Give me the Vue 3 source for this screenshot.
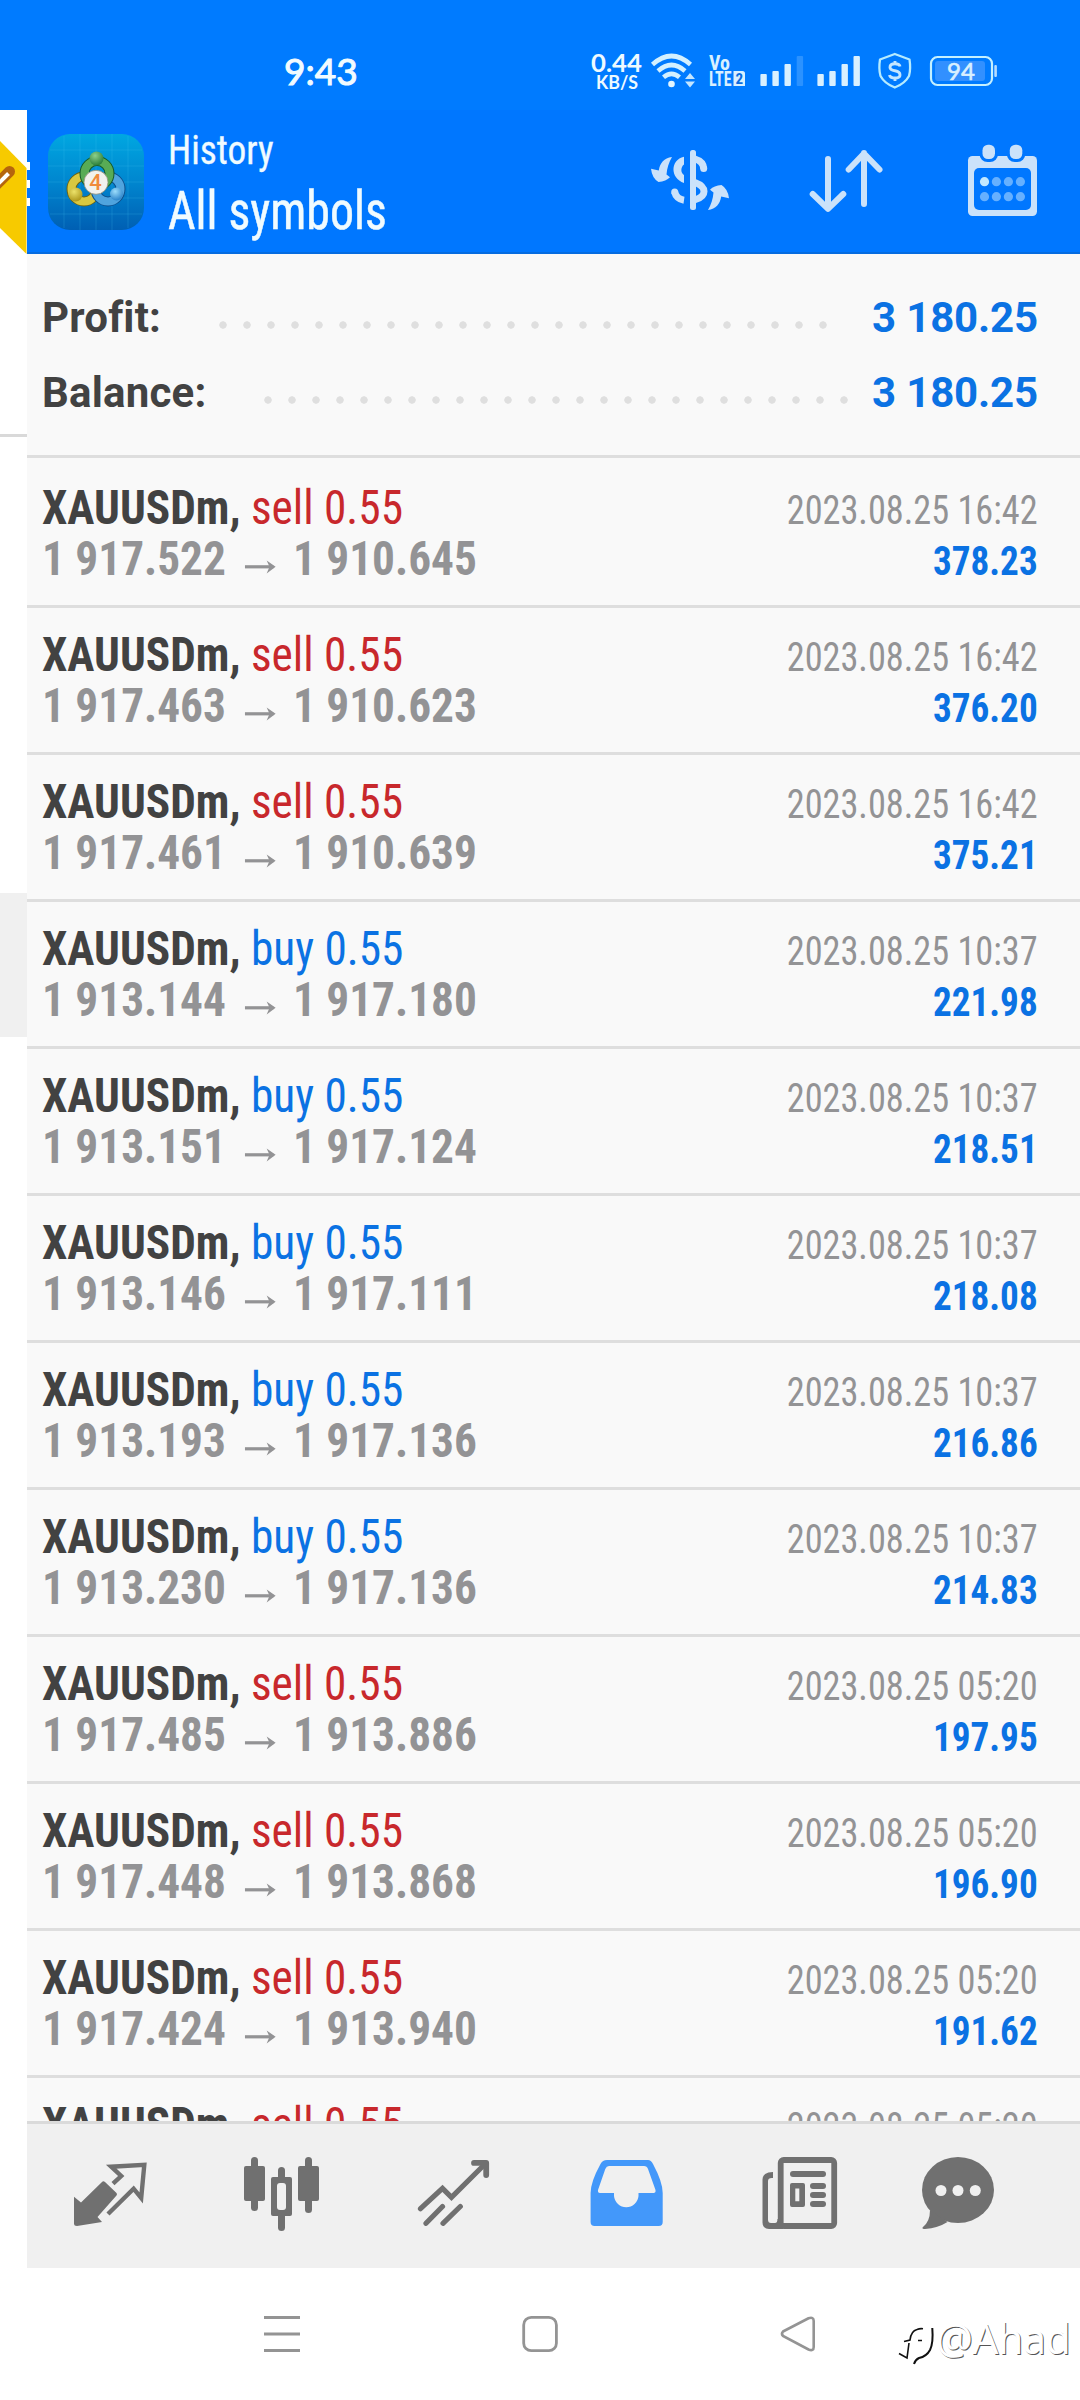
<script setup>
const D = '2023.08.25 '
const rows = [
  ['sell', '1 917.522', '1 910.645', '16:42', '378.23'],
  ['sell', '1 917.463', '1 910.623', '16:42', '376.20'],
  ['sell', '1 917.461', '1 910.639', '16:42', '375.21'],
  ['buy', '1 913.144', '1 917.180', '10:37', '221.98'],
  ['buy', '1 913.151', '1 917.124', '10:37', '218.51'],
  ['buy', '1 913.146', '1 917.111', '10:37', '218.08'],
  ['buy', '1 913.193', '1 917.136', '10:37', '216.86'],
  ['buy', '1 913.230', '1 917.136', '10:37', '214.83'],
  ['sell', '1 917.485', '1 913.886', '05:20', '197.95'],
  ['sell', '1 917.448', '1 913.868', '05:20', '196.90'],
  ['sell', '1 917.424', '1 913.940', '05:20', '191.62'],
  ['sell'],
].map(([side, open, close, time = '05:20', profit]) => ({ side, open, close, date: D + time, profit }))
</script>

<template>
  <div class="screen">
    <div class="status">
      <span class="clock">9:43</span>
      <svg class="sys" viewBox="585 40 420 60" width="420" height="60">
        <g class="net">
          <text x="591" y="71.500" font-size="25.500" textLength="51" lengthAdjust="spacingAndGlyphs">0.44</text>
          <text x="596" y="89.300" font-size="18" textLength="42" lengthAdjust="spacingAndGlyphs">KB/S</text>
        </g>
        <g fill="none" stroke="#d3f0ff" stroke-width="4.600">
          <path d="M652.500 64.500Q671.500 47.500 690.500 64.500" />
          <path d="M658 71Q671.500 59 685 71" />
          <path d="M663.500 77.300Q671.500 70.500 679.500 77.300" />
        </g>
        <circle cx="671.500" cy="84" r="3.300" fill="#e3f6ff" />
        <path d="M685 79l5-6 5 6zM685 81.500h10l-5 6z" fill="#c4e6ff" />
        <g class="volte">
          <text x="709" y="70" font-size="19.500" textLength="21" lengthAdjust="spacingAndGlyphs">Vo</text>
          <text x="709" y="85.800" font-size="20" textLength="22.500" lengthAdjust="spacingAndGlyphs">LTE</text>
          <path d="M733.500 71h9a2.500 2.500 0 0 1 2.500 2.500V86h-11.500z" />
          <text class="sim" x="735.500" y="83.700" font-size="15">2</text>
        </g>
        <g fill="#d9f0ff">
          <rect x="760.400" y="74" width="6.400" height="12" rx="1" />
          <rect x="772.400" y="71" width="6.400" height="15" rx="1" />
          <rect x="784.500" y="64" width="6.400" height="22" rx="1" />
          <rect x="796.700" y="56" width="6.400" height="30" rx="1" opacity=".2" />
          <rect x="817.400" y="74" width="6.400" height="12" rx="1" />
          <rect x="829.300" y="71" width="6.400" height="15" rx="1" />
          <rect x="841.500" y="64" width="6.400" height="22" rx="1" />
          <rect x="853.500" y="56" width="6.400" height="30" rx="1" />
        </g>
        <path d="M894.800 54L909.500 59.500Q911 69 909 76Q905 83.500 894.800 87.500Q884.500 83.500 880.500 76Q878.500 69 880 59.500Z" fill="none" stroke="#b5ebff" stroke-width="2.300" stroke-linejoin="round" />
        <path d="M900 66.500Q899.500 63.800 895 63.800Q890 63.800 890 67.300Q890 70 895 70.800Q900 71.600 900 75Q900 78 895 78Q890 78 889.500 75M895 61v3M895 78v3" fill="none" stroke="#c4e6ff" stroke-width="2.900" />
        <rect x="931" y="57" width="61" height="28" rx="6.500" fill="none" stroke="#c4f0ff" stroke-width="2.200" />
        <rect x="935" y="61" width="50" height="20" rx="3" fill="#3290ff" />
        <rect x="994.300" y="65" width="2.600" height="12" rx="1" fill="#b5dcff" />
        <text class="pct" x="947" y="80" font-size="24">94</text>
      </svg>
    </div>

    <div class="body">
      <aside class="edge">
        <svg class="tag" viewBox="0 0 27 144" width="27" height="144">
          <path d="M0 31L26.500 58V144L0 118Z" fill="#f7ca00" />
          <path d="M-6 77L9.500 61.500" stroke="#b5650d" stroke-width="11" stroke-linecap="round" />
          <path d="M-6 78L8.500 63.500" stroke="#fff" stroke-width="4" />
        </svg>
        <i class="rule"></i>
        <i class="block"></i>
      </aside>

      <main class="app">
        <header class="bar">
          <div class="grip"><i></i><i></i><i></i></div>
          <svg class="logo" viewBox="0 0 96 96" width="96" height="96">
            <defs>
              <linearGradient id="sky" x1="0" y1="0" x2="0" y2="1"><stop offset="0" stop-color="#00a7e1" /><stop offset=".5" stop-color="#0086cf" /><stop offset="1" stop-color="#005fb3" /></linearGradient>
              <radialGradient id="gr" cx=".4" cy=".3" r=".8"><stop offset="0" stop-color="#8ed08a" /><stop offset="1" stop-color="#1d7430" /></radialGradient>
              <radialGradient id="ye" cx=".4" cy=".3" r=".8"><stop offset="0" stop-color="#ece26a" /><stop offset="1" stop-color="#a58d10" /></radialGradient>
              <radialGradient id="bl" cx=".4" cy=".3" r=".8"><stop offset="0" stop-color="#9bdcfb" /><stop offset="1" stop-color="#1c78c4" /></radialGradient>
            </defs>
            <rect width="96" height="96" rx="22" fill="url(#sky)" />
            <path d="M16 2V94M32 0V96M48 0V96M64 0V96M80 2V94M2 16H94M0 32H96M0 48H96M0 64H96M2 80H94" stroke="#4cc8f0" stroke-opacity=".2" />
            <g fill="none">
              <circle cx="36" cy="55" r="12.500" stroke="#6e6410" stroke-width="10" /><circle cx="36" cy="55" r="12.500" stroke="#d9c840" stroke-width="8" />
              <circle cx="60" cy="55" r="12.500" stroke="#0d4f8c" stroke-width="10" /><circle cx="60" cy="55" r="12.500" stroke="#4fa4de" stroke-width="8" />
              <circle cx="49" cy="39.500" r="12.500" stroke="#14592a" stroke-width="10" /><circle cx="49" cy="39.500" r="12.500" stroke="#58ab55" stroke-width="8" />
            </g>
            <circle cx="48.500" cy="24.500" r="7" fill="url(#gr)" /><circle cx="27.500" cy="60.500" r="7" fill="url(#ye)" /><circle cx="68.500" cy="60" r="6.500" fill="url(#bl)" />
            <circle cx="48" cy="48.300" r="12" fill="#f1f1ee" stroke="#8f8f7a" stroke-width=".8" />
            <text x="47.500" y="55.500" text-anchor="middle" class="four">4</text>
          </svg>
          <div class="titles">
            <span class="t1">History</span>
            <span class="t2">All symbols</span>
          </div>
          <svg class="i-dollar" viewBox="650 148 80 64" width="80" height="64" fill="#cbe2fa">
            <rect x="690" y="150" width="6" height="60" rx="2.500" />
            <path d="M684 156.700C670 160 670 178 684 183V175C680.500 173 680.500 167 684 164.500Z" />
            <g fill="none" stroke="#cbe2fa" stroke-width="7">
              <path d="M674.700 192C675.500 196 679 199.500 684 200.200" /><circle cx="674.700" cy="192" r="3.500" fill="#cbe2fa" stroke="none" />
              <path d="M695 159C700 160.500 703.500 164 703.700 168.500" /><circle cx="703.700" cy="168.500" r="3.500" fill="#cbe2fa" stroke="none" />
              <path d="M695 182.500C707 187 707 196 695 199.700" />
            </g>
            <path id="swing" d="M672 157C664 158 660 163 658.800 170.500L651 168.700Q652 178 658.500 182Q666 181.500 670 177.300L666.500 174.500C667 168 669 162 672 157Z" />
            <use href="#swing" transform="rotate(180 690 183.500)" />
          </svg>
          <svg class="i-sort" viewBox="808 148 78 66" width="78" height="66" fill="none" stroke="#cbe2fa" stroke-width="6" stroke-linecap="round" stroke-linejoin="round">
            <path d="M828 159V208M812.700 194L828 208.800L843.300 194M864 204V153M848.700 169.500L864 153.500L879.500 169.500" />
          </svg>
          <svg class="i-cal" viewBox="967 144 71 73" width="71" height="73">
            <rect x="968" y="156" width="69" height="60" rx="4.500" fill="#cbe2fa" />
            <rect x="974" y="168" width="57" height="42" rx="5" fill="#0077ff" />
            <g fill="#0077ff"><rect x="979.500" y="142" width="18.500" height="20" rx="8" /><rect x="1006.800" y="142" width="18.500" height="20" rx="8" /></g>
            <g fill="#cbe2fa"><rect x="982.500" y="144.700" width="12.500" height="14.300" rx="5.500" /><rect x="1009.800" y="144.700" width="12.500" height="14.300" rx="5.500" /></g>
            <g fill="#66b0ff">
              <circle cx="984.500" cy="181.700" r="4.600" fill="#c2e8ff" /><circle cx="996.400" cy="181.700" r="4.600" /><circle cx="1008.400" cy="181.700" r="4.600" /><circle cx="1020.400" cy="181.700" r="4.600" />
              <circle cx="984.500" cy="196.700" r="4.600" /><circle cx="996.400" cy="196.700" r="4.600" /><circle cx="1008.400" cy="196.700" r="4.600" /><circle cx="1020.400" cy="196.700" r="4.600" />
            </g>
          </svg>
        </header>

        <section class="summary">
          <div class="line"><span class="lab">Profit:</span><i class="dots d1"></i><span class="val">3 180.25</span></div>
          <div class="line"><span class="lab">Balance:</span><i class="dots d2"></i><span class="val">3 180.25</span></div>
        </section>

        <section class="list">
          <div v-for="(r, i) in rows" :key="i" class="row">
            <div class="left">
              <div class="deal"><b>XAUUSDm,</b> <span :class="r.side">{{ r.side }} 0.55</span></div>
              <div v-if="r.open" class="prices"><span>{{ r.open }}</span><svg width="34" height="14" viewBox="0 0 34 14"><path d="M1 6.800H31" fill="none" stroke="#939395" stroke-width="3.200" /><path d="M24 .500L33.500 6.800L24 13.500L27 6.800Z" fill="#939395" /></svg><span>{{ r.close }}</span></div>
            </div>
            <div class="right">
              <span class="date">{{ r.date }}</span>
              <span v-if="r.profit" class="profit">{{ r.profit }}</span>
            </div>
          </div>
        </section>

        <nav class="tabs">
          <svg viewBox="72 2156 76 76" width="76" height="76" fill="#707070">
            <path d="M74 2196.700L81 2202.500L102 2182Q103.300 2180.700 105 2182L116.500 2193Q117.500 2194.300 116.500 2195.500L97.500 2217L102 2222L77 2226Q74 2226 74 2223.500Z" />
            <path d="M113 2183.700L121.200 2176L111.200 2166.700L144.300 2164.900L141.200 2198L133.600 2188.700L108 2214" fill="none" stroke="#707070" stroke-width="4.400" />
          </svg>
          <svg viewBox="243 2156 77 76" width="77" height="76" fill="#707070">
            <rect x="251" y="2157" width="7" height="54" rx="3.500" /><rect x="244" y="2166" width="21" height="35" rx="2" />
            <rect x="278" y="2167" width="7" height="64" rx="3.500" /><rect x="271" y="2177" width="21" height="39" rx="2" />
            <rect x="277" y="2183" width="9" height="27" rx="3" fill="#f0f0f0" />
            <rect x="305" y="2157" width="7" height="56" rx="3.500" /><rect x="298" y="2166" width="21" height="35" rx="2" />
          </svg>
          <svg viewBox="417 2156 73 76" width="73" height="76" fill="none" stroke="#707070" stroke-width="5.200" stroke-linecap="round">
            <path d="M420.500 2208.700L442.500 2188.300L451.500 2197.300L485 2164M426 2223.300L442.500 2206.500M443 2223.300L460.300 2206.500" />
            <path d="M474 2162.900H486.200V2175" stroke-width="5.800" stroke-linejoin="round" />
          </svg>
          <svg viewBox="590 2156 73 76" width="73" height="76">
            <path fill-rule="evenodd" fill="#4398fa" d="M607 2160H648Q651 2160 653 2164Q662.700 2182 662.700 2193V2222Q662.700 2226 658.700 2226H594.600Q590.600 2226 590.600 2222V2193Q590.600 2182 600.500 2164Q602.500 2160 607 2160ZM609 2166Q606.500 2166 605.300 2169L598 2190Q597.500 2193 600 2193H614V2196A12.300 12.300 0 0 0 638.500 2196V2193H653.500Q656 2193 655.500 2190L648 2169Q647 2166 644 2166Z" />
          </svg>
          <svg viewBox="762 2156 76 76" width="76" height="76" fill="#707070">
            <rect x="780.700" y="2160" width="53.500" height="66" rx="3" fill="none" stroke="#707070" stroke-width="5.800" />
            <path d="M773 2172V2178Q768 2177.500 768 2181V2219.500Q768 2223 771 2223H775Q777.500 2223 777.500 2219H783V2229H769Q762.500 2229 762.500 2222.500V2179.500Q762.500 2172 773 2172Z" />
            <rect x="790" y="2171" width="36" height="6" rx="3" />
            <path fill-rule="evenodd" d="M792 2183H803Q805 2183 805 2185V2205Q805 2207 803 2207H792Q790 2207 790 2205V2185Q790 2183 792 2183ZM795.300 2188.500V2201.300H799.300V2188.500Z" />
            <rect x="810" y="2183" width="16" height="6" rx="3" /><rect x="810" y="2192" width="16" height="6" rx="3" /><rect x="810" y="2201" width="16" height="6" rx="3" />
          </svg>
          <svg viewBox="921 2156 74 76" width="74" height="76" fill="#707070">
            <ellipse cx="958" cy="2190" rx="36" ry="33" />
            <path d="M930 2210Q930 2222 922.500 2227.500Q922 2229.300 925 2229Q938 2228 947.500 2222Z" />
            <g fill="#f0f0f0"><circle cx="941" cy="2190.500" r="5.500" /><circle cx="958" cy="2190.500" r="5.500" /><circle cx="975.300" cy="2190.500" r="5.500" /></g>
          </svg>
        </nav>
      </main>
    </div>

    <footer class="sysnav">
      <svg viewBox="263 2314 38 40" width="38" height="40"><path d="M264 2317.500H300M264 2334H300M264 2350.500H300" stroke="#949494" stroke-width="3" /></svg>
      <svg viewBox="521 2314 38 40" width="38" height="40"><rect x="523.700" y="2317.400" width="32.700" height="33.300" rx="7.500" fill="none" stroke="#949494" stroke-width="2.800" /></svg>
      <svg viewBox="779 2314 38 40" width="38" height="40"><path d="M783 2331.500L808.500 2318.300Q813.700 2316.500 813.700 2321V2347Q813.700 2351.500 808.500 2349.500L783 2336Q781 2333.700 783 2331.500Z" fill="none" stroke="#949494" stroke-width="2.600" /></svg>
      <div class="mark">
        <svg viewBox="896 2324 40 42" width="40" height="42" fill="none" stroke="#111" stroke-width="1.600"><path d="M904 2341.500L910 2340Q911 2331 917 2329.500Q920 2328.300 923 2328.800M909 2343L907 2358L899 2353.500M918 2340.500H922" /><path d="M932.300 2328Q933.500 2343 930 2350Q926.500 2356.500 919 2358Q915.500 2359.500 914 2364" stroke-width="2" /></svg>
        <span>@Ahad</span>
      </div>
    </footer>
  </div>
</template>

<style>
body { margin: 0; background: #fff; }
</style>

<style scoped>
.screen { width: 1080px; height: 2400px; overflow: hidden; display: flex; flex-direction: column; font-family: Roboto, "Liberation Sans", sans-serif; background: #fff; }
svg { display: block; flex: none; }
.status { height: 110px; flex: none; background: #007bff; display: flex; box-sizing: border-box; padding: 40px 75px 0 284px; justify-content: space-between; }
.clock { color: #f2fbff; font: 400 37px/62px Lato, sans-serif; -webkit-text-stroke: 1px #f2fbff; }
.net text { fill: #eefaff; font-family: Lato, sans-serif; font-weight: 700; }
.volte { fill: #d9f0ff; font-family: Roboto, sans-serif; font-weight: 700; font-stretch: 75%; }
.volte .sim { fill: #0a6be0; }
.pct { fill: #d9f0ff; font-family: Lato, sans-serif; font-weight: 400; stroke: #d9f0ff; stroke-width: .6px; }
.body { display: flex; height: 2158px; flex: none; }
.edge { width: 27px; flex: none; }
.rule { display: block; height: 3px; margin-top: 180px; background: #d9d9d9; }
.block { display: block; height: 144px; margin-top: 456px; background: #f0f0f0; }
.app { flex: 1; display: flex; flex-direction: column; background: #f9f9f9; }
.bar { height: 144px; flex: none; display: flex; background: #07f; box-sizing: border-box; border-bottom: 2px solid #066ce0; }
.grip { width: 3px; padding-top: 52px; display: flex; flex-direction: column; gap: 10px; }
.grip i { height: 8px; background: #fff; }
.logo { margin: 24px 0 0 18px; }
.four { fill: #f08a3c; font: 500 22px Roboto, sans-serif; }
.titles { width: 479px; margin-left: 24px; color: #f0fbff; font-stretch: 75%; display: flex; flex-direction: column; align-items: flex-start; white-space: nowrap; padding-top: 17px; }
.titles span { transform-origin: 0 0; }
.t1 { font-size: 40px; line-height: 48px; transform: scaleX(.935); -webkit-text-stroke: .3px; }
.t2 { font-size: 53px; line-height: 73px; transform: scaleX(.903); -webkit-text-stroke: .5px; }
.i-dollar { margin: 38px 0 0 3px; }
.i-sort { margin: 38px 0 0 78px; }
.i-cal { margin: 34px 0 0 81px; }
.summary { height: 204px; flex: none; box-sizing: border-box; border-bottom: 3px solid #dedede; padding: 26px 42px 0 15px; }
.line { height: 75px; display: flex; align-items: center; font-weight: 700; font-size: 42px; line-height: 75px; }
.lab { color: #424242; letter-spacing: .2px; }
.val { color: #0b72e3; letter-spacing: -.15px; }
.dots { height: 8px; margin-top: 15px; background: radial-gradient(circle at 12px 4px, #dfdfdf 3.400px, transparent 4px) 0 0 / 24px 8px repeat-x; }
.d1 { width: 624px; margin-left: auto; margin-right: 37px; }
.d2 { width: 552px; padding-right: 48px; margin-left: auto; margin-right: 16px; }
.list { flex: 1; min-height: 0; overflow: hidden; padding-top: 3px; }
.row { height: 147px; box-sizing: border-box; border-bottom: 3px solid #dedede; display: flex; justify-content: space-between; padding: 21px 42px 0 15px; font-stretch: 75%; white-space: nowrap; }
.deal, .prices { font-size: 48px; line-height: 51px; height: 51px; transform: scaleX(.944); transform-origin: 0 0; }
.deal { color: #424242; }
.sell { color: #c8282c; }
.buy { color: #0b72e3; }
.prices { color: #939395; font-weight: 700; display: flex; }
.prices svg { margin: 27px 18px 0 19px; }
.right { display: flex; flex-direction: column; align-items: flex-end; font-size: 40px; line-height: 51px; padding-top: 3px; }
.right span { transform-origin: 100% 0; }
.date { color: #939395; transform: scaleX(.907); }
.profit { color: #0b72e3; font-weight: 700; transform: scaleX(.93); }
.tabs { height: 147px; flex: none; box-sizing: border-box; border-top: 3px solid #dadada; background: #f0f0f0; display: flex; padding: 32px 0 0 45px; }
.tabs svg:nth-child(2) { margin-left: 95px; }
.tabs svg:nth-child(3) { margin-left: 97px; }
.tabs svg:nth-child(4) { margin-left: 100px; }
.tabs svg:nth-child(5) { margin-left: 99px; }
.tabs svg:nth-child(6) { margin-left: 83px; }
.sysnav { flex: 1; display: flex; padding-top: 46px; padding-left: 263px; }
.sysnav > svg + svg { margin-left: 220px; }
.mark { display: flex; margin: 5px 0 0 79px; color: #fff; }
.mark span { font: 400 41px/56px "Noto Sans", sans-serif; letter-spacing: -.5px; text-shadow: 1px .8px 0 #555; margin-top: -9px; margin-left: 0; }
.mark svg { margin-top: 5px; }
</style>
